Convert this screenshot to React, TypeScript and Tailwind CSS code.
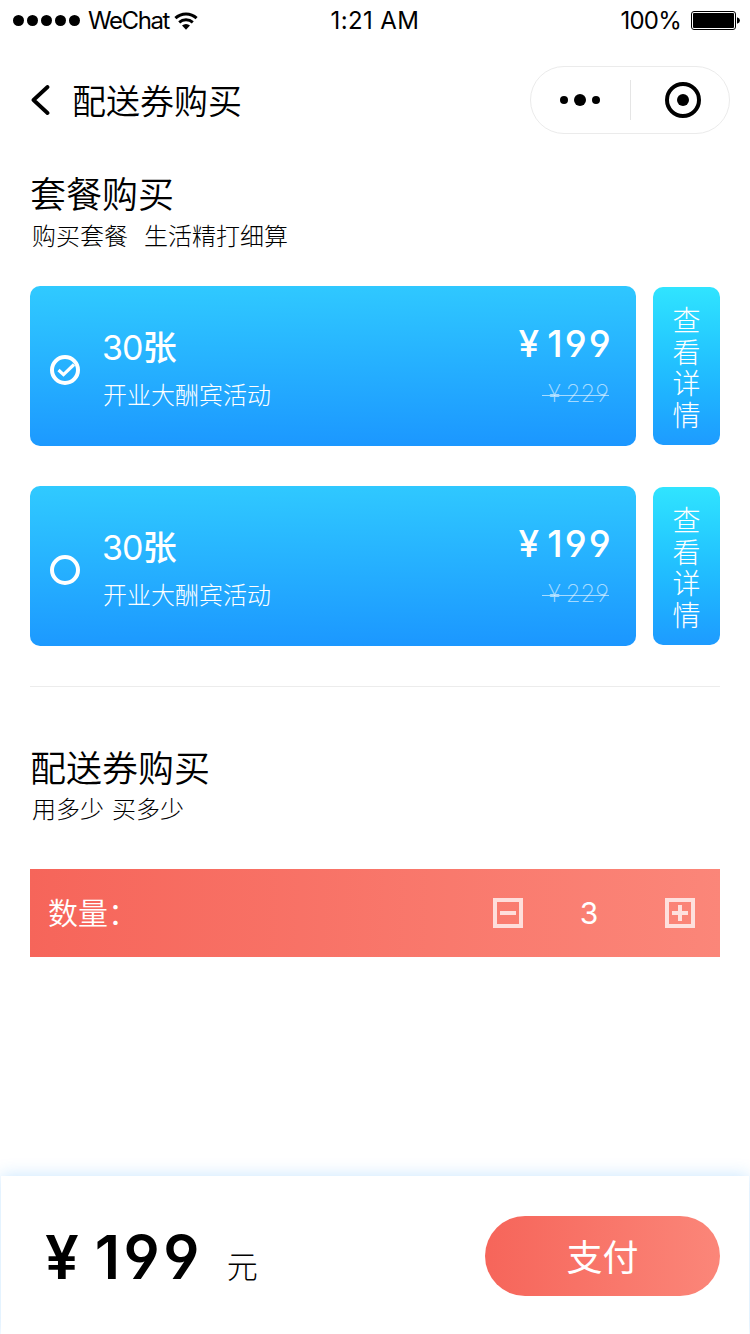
import React, { useState } from 'react';

interface Package {
  id: number;
  count: string;
  label: string;
  price: number;
  originalPrice: number;
}

const packages: Package[] = [
  { id: 1, count: '30', label: '开业大酬宾活动', price: 199, originalPrice: 229 },
  { id: 2, count: '30', label: '开业大酬宾活动', price: 199, originalPrice: 229 },
];

const StatusBar: React.FC = () => (
  <div className="h-10 grid grid-cols-3 items-center pl-[13px] pr-[10px] text-2xl leading-10">
    <div className="h-10 flex items-center">
      <div className="flex gap-[3px]">
        {[0, 1, 2, 3, 4].map((dot) => (
          <span key={dot} className="size-[11px] rounded-full bg-black" />
        ))}
      </div>
      <span className="ml-2 mt-px w-[82px] tracking-[-1.4px] whitespace-nowrap">WeChat</span>
      <svg className="ml-[4px] mt-px" width="24" height="18" viewBox="0 0 24 18">
        <path d="M1.4 6.2a15.5 15.5 0 0 1 21.2 0" fill="none" stroke="#000" strokeWidth="3" />
        <path d="M5.2 10.4a10 10 0 0 1 13.6 0" fill="none" stroke="#000" strokeWidth="2.8" />
        <path d="M8 13.6a6 6 0 0 1 8 0L12 17.8z" fill="#000" />
      </svg>
    </div>
    <span className="mt-px pr-[3px] text-center tracking-[0.4px]">1:21 AM</span>
    <div className="h-10 flex items-center justify-end">
      <span className="mt-px tracking-[-0.8px]">100%</span>
      <svg className="ml-[10px]" width="49" height="19" viewBox="0 0 49 19">
        <rect x="0.5" y="0.5" width="44" height="18" rx="2.5" fill="none" stroke="#000" />
        <rect x="2" y="2" width="41" height="15" rx="1" fill="#000" />
        <path d="M46 6.3q3 1 3 3.2t-3 3.2z" fill="#000" />
      </svg>
    </div>
  </div>
);

const NavBar: React.FC = () => (
  <header className="h-[120px] flex items-center pl-[31px] pr-5">
    <svg width="20" height="30" viewBox="0 0 20 30" fill="none" stroke="#000" strokeWidth="3.8" strokeLinecap="round" strokeLinejoin="round">
      <path d="M16.5 2L2.5 15l14 13" />
    </svg>
    <h1 className="ml-[21px] mt-[3px] text-[34px] leading-10 font-[330]">配送券购买</h1>
    <div className="ml-auto w-[200px] h-[68px] rounded-full border border-[#ebebeb] flex items-center">
      <div className="w-[99px] pr-[2px] flex items-center justify-center gap-[6px]">
        <span className="size-2 rounded-full bg-black" />
        <span className="size-3 rounded-full bg-black" />
        <span className="size-2 rounded-full bg-black" />
      </div>
      <span className="w-px h-10 bg-[#e5e5e5]" />
      <svg className="ml-[34px]" width="36" height="36" viewBox="0 0 36 36">
        <circle cx="18" cy="18" r="16" fill="none" stroke="#000" strokeWidth="4" />
        <circle cx="18" cy="18" r="6" fill="#000" />
      </svg>
    </div>
  </header>
);

const RadioMark: React.FC<{ checked: boolean }> = ({ checked }) => (
  <svg width="30" height="30" viewBox="0 0 30 30" fill="none" stroke="#fff">
    <circle cx="15" cy="15" r="13" strokeWidth="4" />
    {checked && <path d="M8.5 15l5 4.6L24 9.5" strokeWidth="3.2" />}
  </svg>
);

interface PackageRowProps {
  item: Package;
  checked: boolean;
  onSelect: () => void;
}

const PackageRow: React.FC<PackageRowProps> = ({ item, checked, onSelect }) => (
  <div className="flex items-center gap-[17px] text-white">
    <button
      type="button"
      onClick={onSelect}
      className="w-[606px] h-40 rounded-[10px] bg-linear-[179deg] from-[#30caff] to-[#1b96ff] flex pl-5 pr-[25px] text-left"
    >
      <span className="self-center mt-2">
        <RadioMark checked={checked} />
      </span>
      <span className="ml-[22px] pt-[42px] flex flex-col">
        <span className="text-[34px] leading-10 font-medium">
          <span className="tracking-[-0.9px] font-[430]">{item.count}</span>张
        </span>
        <span className="mt-2 ml-px text-2xl leading-10 font-light">{item.label}</span>
      </span>
      <span className="ml-auto pt-[38px] flex flex-col items-end">
        <span className="flex text-[37px] leading-10 font-[480]">
          <span>¥</span>
          <span className="ml-2 tracking-[2.2px] -mr-[2px] [font-feature-settings:'cv04']">{item.price}</span>
        </span>
        <span className="relative mt-[10px] mr-[2px] pl-1 flex text-2xl leading-10 font-extralight text-white/60">
          <span>¥</span>
          <span className="ml-[5px] [font-feature-settings:'cv04']">{item.originalPrice}</span>
          <span className="absolute -left-[2px] right-0 top-[21px] h-px bg-white/60" />
        </span>
      </span>
    </button>
    <button
      type="button"
      className="w-[67px] h-[158px] rounded-[10px] bg-linear-to-b from-[#30e4ff] to-[#1e9bff] flex items-center justify-center"
    >
      <span className="w-7 mt-[6px] text-[28px] leading-[31.5px] font-light break-all">查看详情</span>
    </button>
  </div>
);

const StepButton: React.FC<{ plus?: boolean; onClick: () => void }> = ({ plus, onClick }) => (
  <button type="button" onClick={onClick} aria-label={plus ? '增加' : '减少'}>
    <svg width="30" height="30" viewBox="0 0 30 30" fill="none" stroke="#fff" strokeOpacity="0.75" strokeWidth="4">
      <rect x="2" y="2" width="26" height="26" />
      <path d={plus ? 'M7 15h16M15 7v6M15 17v6' : 'M7 15h16'} />
    </svg>
  </button>
);

const App: React.FC = () => {
  const [selected, setSelected] = useState(1);
  const [quantity, setQuantity] = useState(3);

  return (
    <div className="w-[750px] h-[1334px] bg-white text-black flex flex-col overflow-hidden font-[Inter,'Noto_Sans_CJK_SC',sans-serif]">
      <StatusBar />
      <NavBar />

      <main className="flex-1 px-[30px]">
        <section className="pt-[15px] pb-10 border-b border-[#ececec]">
          <h2 className="text-[36px] leading-10 font-[330]">套餐购买</h2>
          <p className="ml-[2px] mt-[2px] text-2xl leading-10 font-[250] flex gap-4">
            <span>购买套餐</span>
            <span>生活精打细算</span>
          </p>
          <div className="mt-[29px] flex flex-col gap-10">
            {packages.map((item) => (
              <PackageRow
                key={item.id}
                item={item}
                checked={item.id === selected}
                onSelect={() => setSelected(item.id)}
              />
            ))}
          </div>
        </section>

        <section className="pt-[62px]">
          <h2 className="text-[36px] leading-10 font-[330]">配送券购买</h2>
          <p className="ml-[2px] mt-px text-2xl leading-10 font-[250] flex gap-2">
            <span>用多少</span>
            <span>买多少</span>
          </p>
          <div className="mt-[39px] h-[88px] bg-linear-[91deg] from-[#f6655a] to-[#fb8679] flex items-center pl-[18px] pr-[25px] text-white text-[30px]">
            <span className="mt-px font-[350]">数量：</span>
            <div className="ml-auto flex items-center">
              <StepButton onClick={() => setQuantity(Math.max(0, quantity - 1))} />
              <span className="w-[142px] text-center pr-[10px]">{quantity}</span>
              <StepButton plus onClick={() => setQuantity(quantity + 1)} />
            </div>
          </div>
        </section>
      </main>

      <footer className="mx-px h-[158px] bg-white shadow-[0_0_16px_rgba(27,150,255,0.25)] flex items-center pl-11 pr-[29px]">
        <span className="mt-[3px] flex text-[60px] leading-[80px] font-[580]">
          <span>¥</span>
          <span className="ml-4 tracking-[3.4px] [font-feature-settings:'cv04']">199</span>
        </span>
        <span className="ml-6 mt-[24px] text-[31px] leading-10 font-light">元</span>
        <button
          type="button"
          className="ml-auto mt-[2px] pt-1 w-[235px] h-20 rounded-full bg-linear-[91deg] from-[#f6655a] to-[#fb8679] text-white text-[36px]"
        >
          支付
        </button>
      </footer>
    </div>
  );
};

export default App;
